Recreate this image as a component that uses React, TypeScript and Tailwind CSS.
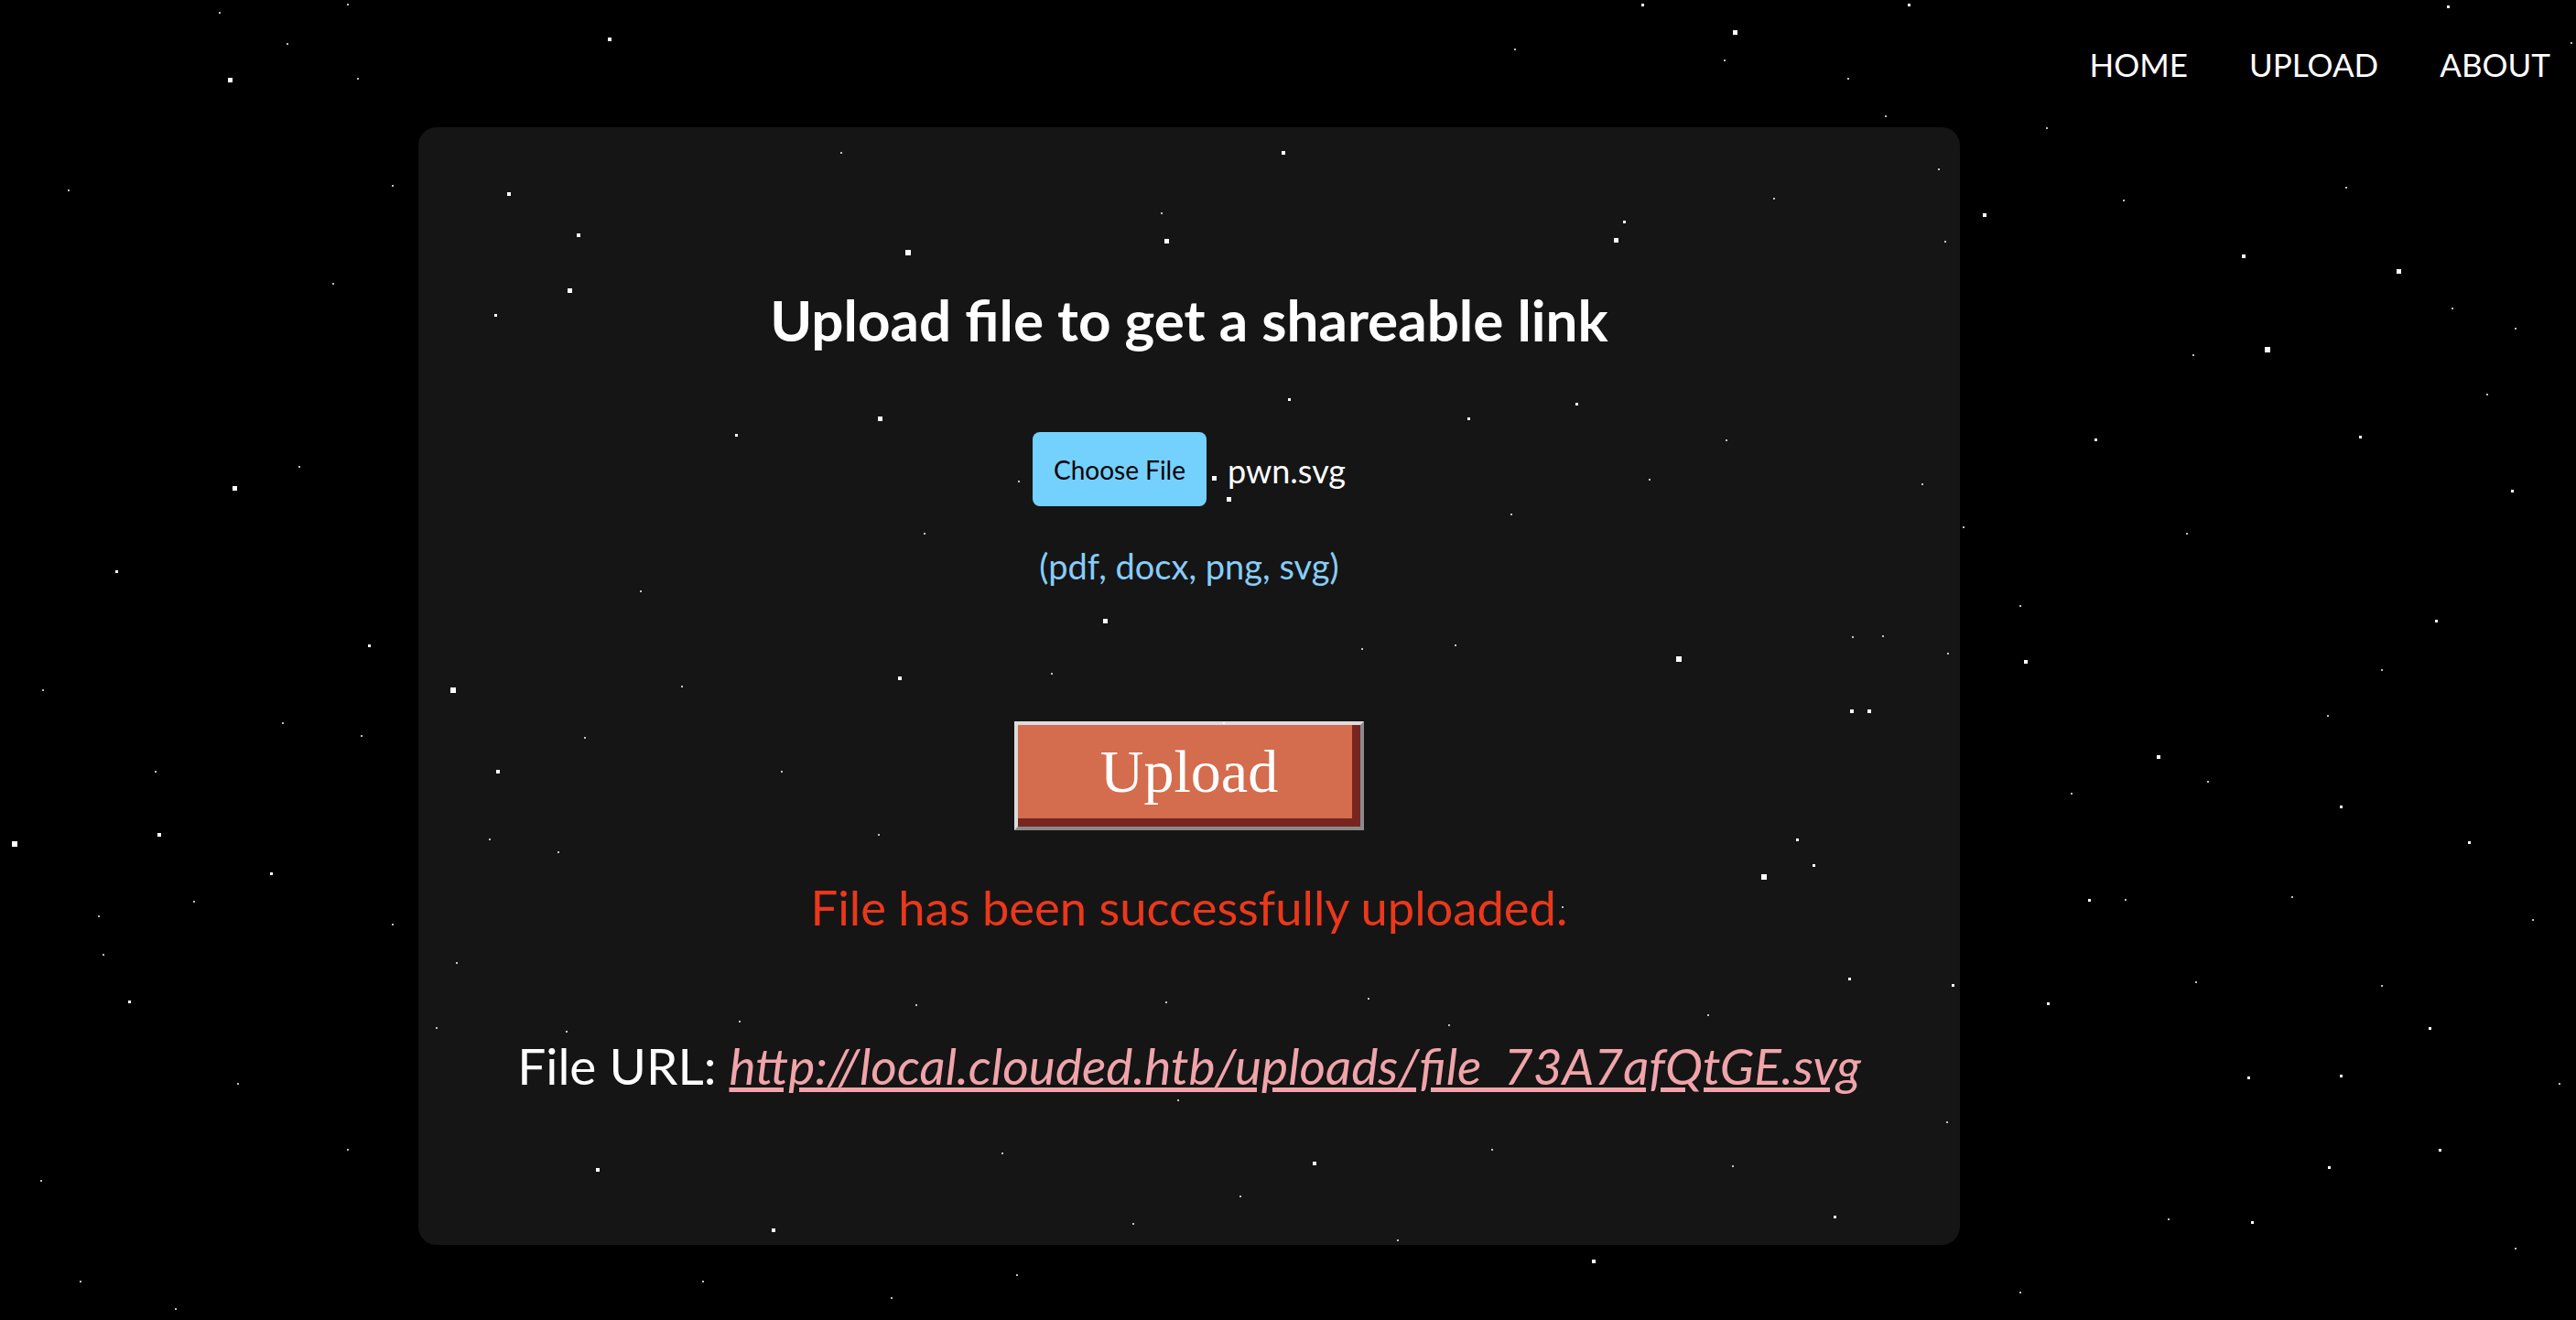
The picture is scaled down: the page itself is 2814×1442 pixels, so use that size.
import React from "react";

const S = 2814 / 1568;

const RAW: [number, number, number][] = [
  [140,49,5],[371,24,4],[1056,20,5],[310,118,4],[352,143,4],[553,154,6],[710,147,5],[984,146,5],[347,177,5],[1380,213,6],[1460,165,5],[1208,131,4],[536,255,5],[143,297,5],[448,265,3],[1437,266,3],[1276,268,3],[673,378,5],[1022,401,6],[276,420,6],[548,413,4],[9,514,6],[1127,433,4],[1138,433,4],[303,470,4],[1074,534,6],[1233,403,4],[1314,461,4],[1425,491,3],[1503,513,3],[165,532,3],[97,508,4],[1094,511,3],[1104,527,3],[1189,600,3],[800,708,4],[364,712,4],[471,749,4],[970,768,4],[1117,741,3],[1126,596,3],[1369,656,3],[1425,655,3],[1479,626,3],[1485,700,3],[1247,611,3],[1272,548,3],[79,610,3],[63,581,2],[1371,744,3],[1418,711,3],[225,393,3],[239,563,2],[278,586,2],[1000,3,3],[1162,3,3],[1490,4,3],[1483,378,3],[1450,408,2],[71,348,3],[42,116,2],[1335,216,2],[1493,188,2],[1529,299,3],[1331,325,2],[989,135,3],[1366,156,4],[739,291,5],[748,304,5],[785,243,3],[960,246,3],[894,255,3],[302,192,3],[218,48,2],[212,3,2],[134,8,2],[175,27,2],[1125,48,2],[1050,37,2],[922,30,2],[781,93,4],[707,130,2],[512,93,2],[1080,121,2],[1148,71,2],[1180,103,2],[1184,147,2],[1246,78,2],[1293,122,2],[1428,114,2],[1565,26,2],[1531,200,2],[1514,240,2],[203,173,2],[239,113,2],[182,284,2],[26,420,2],[220,448,2],[172,440,2],[95,470,2],[60,558,2],[118,549,2],[25,719,2],[145,660,2],[49,780,2],[107,797,2],[212,700,2],[266,626,2],[428,780,2],[345,628,2],[543,790,2],[619,776,2],[717,670,2],[755,728,2],[851,755,2],[1055,710,2],[1185,683,2],[1230,787,2],[1320,742,2],[1337,598,2],[1531,760,2],[1542,560,2],[1558,660,2],[1450,600,2],[1417,436,2],[1395,546,2],[1344,476,2],[1294,548,2],[1261,483,2],[1186,398,2],[1128,388,2],[1146,387,2],[1230,369,2],[1195,321,2],[1170,295,2],[1051,268,2],[1004,292,2],[920,313,2],[886,393,2],[829,395,2],[745,440,2],[675,465,2],[535,508,2],[476,470,2],[415,418,2],[390,360,2],[356,449,2],[563,325,2],[640,410,2],[620,293,2],[340,519,2],[298,511,2],[450,622,2],[558,612,2],[710,610,2],[833,608,2],[882,624,2],[951,552,2],[1040,618,2],[908,700,2],[690,745,2],[610,702,2]
];

function Stars() {
  return (
    <svg className="pointer-events-none absolute left-0 top-0" width={2814} height={1442} viewBox="0 0 2814 1442">
      {RAW.map(([x, y, s], i) => (
        <rect
          key={i}
          x={Math.round(x * S - s / 2)}
          y={Math.round(y * S - s / 2)}
          width={s}
          height={s}
          fill="#ffffff"
          opacity={s <= 2 ? 0.75 : 1}
        />
      ))}
    </svg>
  );
}

export default function App() {
  return (
    <div className="relative h-[1442px] w-[2814px] overflow-hidden bg-black font-['Lato','Noto_Sans',sans-serif]">
      <nav className="flex h-[139px] justify-end gap-[67px] pr-[28px] pt-[53px] text-[35px] leading-none text-white">
        <a>HOME</a>
        <a>UPLOAD</a>
        <a>ABOUT</a>
      </nav>
      <main className="ml-[457px] flex h-[1221px] w-[1684px] flex-col items-center rounded-[20px] bg-[#151515] pt-[179px]">
        <h1 className="text-[62px] font-bold leading-none text-white">Upload file to get a shareable link</h1>
        <div className="mt-[92px] flex items-center">
          <span className="flex h-[81px] w-[190px] items-center justify-center rounded-[8px] bg-[#74d0fc] text-[28px] leading-none text-black">
            Choose File
          </span>
          <span className="ml-[23px] mt-[3px] text-[36px] leading-none text-white">pwn.svg</span>
        </div>
        <p className="mt-[46px] text-[38px] leading-none text-[#87cdf9]">(pdf, docx, png, svg)</p>
        <button className="mt-[151px] flex h-[119px] w-[382px] items-center justify-center border-4 border-t-[#dcdcdc] border-l-[#dcdcdc] border-b-[#8a8a8a] border-r-[#8a8a8a] bg-[#d46c4e] pb-[10px] font-['Liberation_Serif',serif] text-[66px] leading-none text-white shadow-[inset_-9px_-9px_0_#77261f]">
          Upload
        </button>
        <p className="mt-[58px] text-[52.5px] leading-none text-[#ea381b]">File has been successfully uploaded.</p>
        <p className="mt-[119px] text-[55px] leading-none text-white">
          File URL:{" "}
          <a className="italic text-[#f0a4aa] underline">http://local.clouded.htb/uploads/file_73A7afQtGE.svg</a>
        </p>
      </main>
      <Stars />
    </div>
  );
}
